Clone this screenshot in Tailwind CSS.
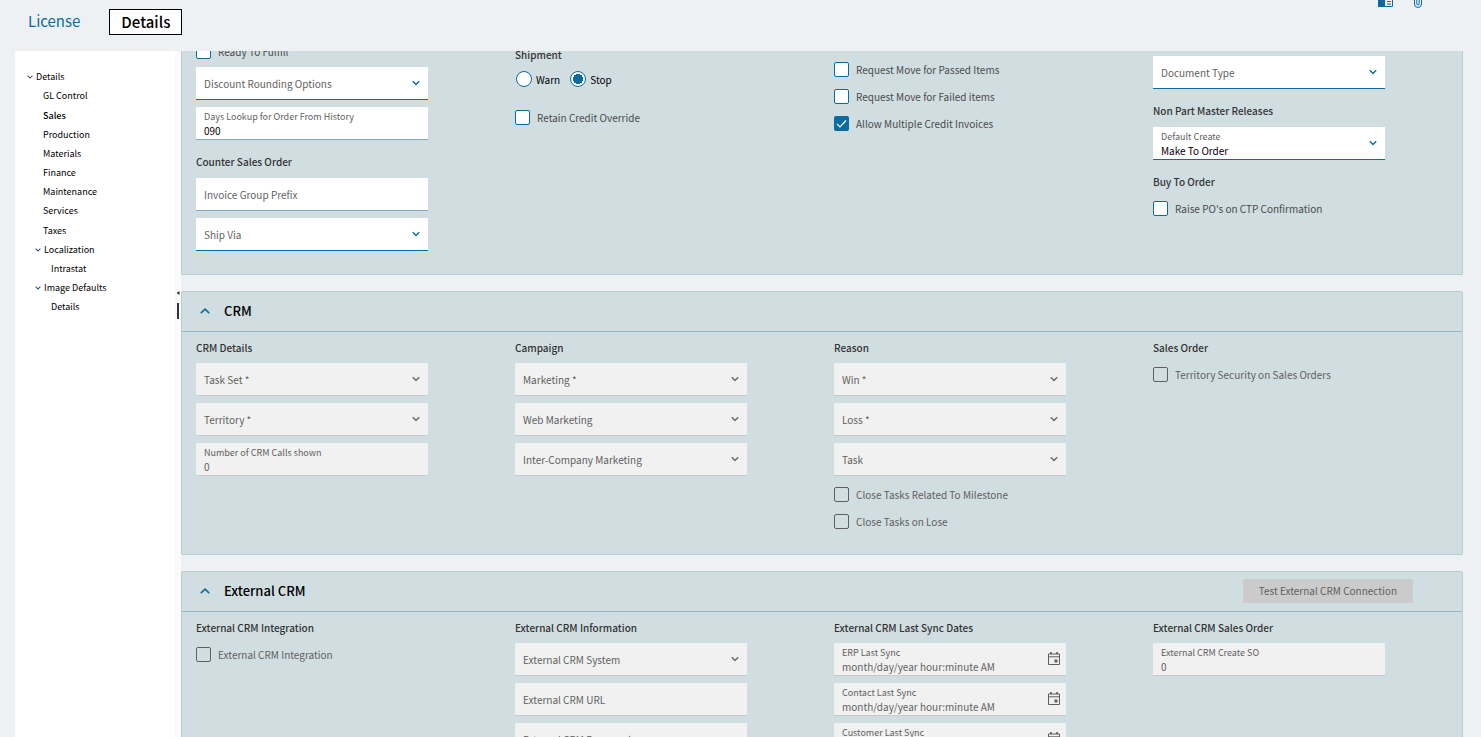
<!DOCTYPE html>
<html lang="en">
<head>
    <meta charset="UTF-8" />
    <meta name="viewport" content="width=device-width, initial-scale=1.0"/>
    <title>Company Configuration - Details</title>
    <script src="https://cdn.jsdelivr.net/npm/@tailwindcss/browser@4"></script>
</head>
<body class="h-screen overflow-hidden flex flex-col bg-[#edf1f4] font-['Source_Sans_Pro','Noto_Sans_CJK_SC',sans-serif] text-[10px] text-[#4a4a4a]">

    <!-- Shared icons -->
    <svg class="hidden">
        <symbol id="down" viewBox="0 0 8 6"><path d="M0.8 1.2 4 4.4 7.2 1.2" fill="none" stroke="currentColor" stroke-width="1.4"/></symbol>
        <symbol id="up" viewBox="0 0 10 6"><path d="M0.8 5.2 5 1.2 9.2 5.2" fill="none" stroke="currentColor" stroke-width="1.6"/></symbol>
        <symbol id="calendar" viewBox="0 0 12 13"><path d="M0.5 2h11v10.5h-11zM0.5 4.8h11M3 0v2M9 0v2" fill="none" stroke="currentColor"/><path d="M2 0.5h2v1.5H2zM8 0.5h2v1.5H8zM6.5 7.5h3v3h-3z" fill="currentColor"/></symbol>
    </svg>

    <header class="h-[51px] shrink-0 flex justify-between pr-[58px]">
        <nav class="flex items-start pt-[9px] pl-7 gap-[29px] text-[15px] leading-6">
            <a href="#license" class="text-[#0b6a9f]">License</a>
            <a href="#details" class="border border-black bg-white px-[11px] text-black font-medium">Details</a>
        </nav>
        <div class="flex items-start gap-[19px] text-[#0b6a9f]">
            <button type="button" aria-label="Panel">
                <svg class="w-4 h-2" viewBox="0 0 16 8"><path d="M0 0h7v7H0z" fill="currentColor"/><path d="M7 6.5h7.5V0M9 1.5h4M9 4h4" fill="none" stroke="currentColor"/></svg>
            </button>
            <button type="button" aria-label="Attachments">
                <svg class="w-2.5 h-2" viewBox="0 0 10 8"><path d="M1.5 0v4a3.4 3.4 0 0 0 7 0V0M3.8 0v3.8a1.2 1.2 0 0 0 2.4 0V0" fill="none" stroke="currentColor"/></svg>
            </button>
        </div>
    </header>

    <div class="flex-1 min-h-0 flex pl-[15px] pr-[18px]">
        <aside class="w-40 shrink-0 bg-white pt-4 text-[9px] text-black">
            <ul class="leading-[19px]">
                <li class="flex items-center pl-3 gap-[3px]"><svg class="w-1.5 h-1.5 text-[#555]"><use href="#down"/></svg><a href="#">Details</a></li>
                <li class="pl-7"><a href="#">GL Control</a></li>
                <li class="pl-7 pt-px font-medium"><a href="#">Sales</a></li>
                <li class="pl-7"><a href="#">Production</a></li>
                <li class="pl-7"><a href="#">Materials</a></li>
                <li class="pl-7"><a href="#">Finance</a></li>
                <li class="pl-7"><a href="#">Maintenance</a></li>
                <li class="pl-7"><a href="#">Services</a></li>
                <li class="pl-7 pt-px"><a href="#">Taxes</a></li>
                <li class="flex items-center pl-5 gap-[3px]"><svg class="w-1.5 h-1.5 text-[#2b4f8f]"><use href="#down"/></svg><a href="#">Localization</a></li>
                <li class="pl-9"><a href="#">Intrastat</a></li>
                <li class="flex items-center pl-5 gap-[3px]"><svg class="w-1.5 h-1.5 text-[#2b4f8f]"><use href="#down"/></svg><a href="#">Image Defaults</a></li>
                <li class="pl-9"><a href="#">Details</a></li>
            </ul>
        </aside>

        <!-- Splitter -->
        <div class="w-1.5 shrink-0 bg-[#fafafa] flex flex-col items-center pt-60 gap-2">
            <svg class="w-1 h-1" viewBox="0 0 4 4"><path d="M3.5 0v4L0.5 2z" fill="#333"/></svg>
            <div class="w-0.5 h-4 bg-[#333]"></div>
        </div>

        <main class="flex-1 min-w-0 overflow-hidden">
            <div class="-mt-[11px] flex flex-col gap-4">

                <section class="bg-[#d1dee1] border border-t-0 border-[#b9cccf] rounded-b-xs grid grid-cols-4 gap-x-[87px] pl-[14px] pr-[77px] pb-4">
                    <div>
                        <label class="flex items-center gap-[7px] h-[22px] mb-[5px]"><input type="checkbox" class="appearance-none size-[15px] rounded-xs border border-[#0b6a9f] bg-white"/>Ready To Fulfill</label>
                        <div class="relative mb-[7px]">
                            <select aria-label="Discount Rounding Options" class="appearance-none block w-full h-[33px] px-2 bg-white border-b border-[#0b6a9f] text-[#5f5f5f]"><option>Discount Rounding Options</option></select>
                            <svg class="absolute right-2 top-[13px] w-2 h-1.5 text-[#0b6a9f]"><use href="#down"/></svg>
                        </div>
                        <div class="h-[33px] mb-[7px] px-2 pt-[3px] bg-white border-b border-[#7fabc6]">
                            <label for="days" class="block text-[9px] leading-[14px] text-[#5f5f5f]">Days Lookup for Order From History</label>
                            <input id="days" value="090" class="block w-full leading-[14px] h-[14px] text-black"/>
                        </div>
                        <h3 class="mt-[14px] mb-2 leading-4 font-medium text-[#333]">Counter Sales Order</h3>
                        <input aria-label="Invoice Group Prefix" placeholder="Invoice Group Prefix" class="block w-full h-[33px] mb-[7px] px-2 bg-white border-b border-[#7fabc6] placeholder:text-[#5f5f5f]"/>
                        <div class="relative mb-[7px]">
                            <select aria-label="Ship Via" class="appearance-none block w-full h-[33px] px-2 bg-white border-b border-[#0b6a9f] text-[#5f5f5f]"><option>Ship Via</option></select>
                            <svg class="absolute right-2 top-[13px] w-2 h-1.5 text-[#0b6a9f]"><use href="#down"/></svg>
                        </div>
                    </div>

                    <div class="pt-[7px]">
                        <h3 class="mb-2 leading-4 font-medium text-[#333]">Shipment</h3>
                        <div class="flex items-center gap-2.5 h-4 mb-[19px] text-black">
                            <label class="flex items-center gap-1"><input type="radio" name="shipment" class="appearance-none size-4 rounded-full border border-[#0b6a9f] bg-white ml-px"/>Warn</label>
                            <label class="flex items-center gap-1"><input type="radio" name="shipment" checked class="appearance-none size-4 rounded-full border border-[#0b6a9f] bg-white checked:bg-[radial-gradient(circle,#0b6a9f_5px,#fff_5px)]"/>Stop</label>
                        </div>
                        <label class="flex items-center gap-[7px] h-[22px]"><input type="checkbox" class="appearance-none size-[15px] rounded-xs border border-[#0b6a9f] bg-white"/>Retain Credit Override</label>
                    </div>

                    <div class="pt-[18px]">
                        <label class="flex items-center gap-[7px] h-[22px] mb-[5px]"><input type="checkbox" class="appearance-none size-[15px] rounded-xs border border-[#0b6a9f] bg-white"/>Request Move for Passed Items</label>
                        <label class="flex items-center gap-[7px] h-[22px] mb-[5px]"><input type="checkbox" class="appearance-none size-[15px] rounded-xs border border-[#0b6a9f] bg-white"/>Request Move for Failed items</label>
                        <label class="flex items-center gap-[7px] h-[22px]">
                            <span class="relative flex">
                                <input type="checkbox" checked class="appearance-none size-[15px] rounded-xs bg-[#0b6a9f]"/>
                                <svg class="absolute inset-0 size-[15px] pointer-events-none" viewBox="0 0 15 15"><path d="M3 7.8 6 10.8 12 4.5" fill="none" stroke="#fff" stroke-width="1.2"/></svg>
                            </span>Allow Multiple Credit Invoices
                        </label>
                    </div>

                    <div class="pt-4">
                        <div class="relative mb-[7px]">
                            <select aria-label="Document Type" class="appearance-none block w-full h-[33px] px-2 bg-white border-b border-[#0b6a9f] text-[#5f5f5f]"><option>Document Type</option></select>
                            <svg class="absolute right-2 top-[13px] w-2 h-1.5 text-[#0b6a9f]"><use href="#down"/></svg>
                        </div>
                        <h3 class="mt-[14px] mb-2 leading-4 font-medium text-[#333]">Non Part Master Releases</h3>
                        <div class="relative h-[33px] mb-[7px] px-2 pt-[3px] bg-white border-b border-[#0b6a9f]">
                            <label for="create" class="block text-[9px] leading-[14px] text-[#5f5f5f]">Default Create</label>
                            <select id="create" class="appearance-none block w-full h-[14px] leading-[14px] text-black"><option>Make To Order</option></select>
                            <svg class="absolute right-2 top-[13px] w-2 h-1.5 text-[#0b6a9f]"><use href="#down"/></svg>
                        </div>
                        <h3 class="mt-[14px] mb-[7px] leading-4 font-medium text-[#333]">Buy To Order</h3>
                        <label class="flex items-center gap-[7px] h-[22px]"><input type="checkbox" class="appearance-none size-[15px] rounded-xs border border-[#0b6a9f] bg-white"/>Raise PO's on CTP Confirmation</label>
                    </div>
                </section>

                <section class="bg-[#d1dee1] border border-[#b9cccf] rounded-xs">
                    <div class="h-10 flex items-center gap-[14px] pl-[18px] pb-0.5 border-b border-[#95bac5]">
                        <button type="button" aria-label="Collapse CRM" class="text-[#0b6a9f]"><svg class="w-2.5 h-1.5"><use href="#up"/></svg></button>
                        <h2 class="text-[13px] text-black font-medium">CRM</h2>
                    </div>
                    <div class="grid grid-cols-4 gap-x-[87px] pl-[14px] pr-[77px] pt-2 pb-[17px]">
                        <div>
                            <h3 class="mb-[7px] leading-4 font-medium text-[#333]">CRM Details</h3>
                            <div class="relative mb-[7px]">
                                <select disabled aria-label="Task Set" class="appearance-none opacity-100 block w-full h-[33px] px-2 bg-[#f1f1f1] border-b border-[#c6c9c9] text-[#5f5f5f]"><option>Task Set *</option></select>
                                <svg class="absolute right-2 top-[13px] w-2 h-1.5 text-[#666]"><use href="#down"/></svg>
                            </div>
                            <div class="relative mb-[7px]">
                                <select disabled aria-label="Territory" class="appearance-none opacity-100 block w-full h-[33px] px-2 bg-[#f1f1f1] border-b border-[#c6c9c9] text-[#5f5f5f]"><option>Territory *</option></select>
                                <svg class="absolute right-2 top-[13px] w-2 h-1.5 text-[#666]"><use href="#down"/></svg>
                            </div>
                            <div class="h-[33px] mb-[7px] px-2 pt-[3px] bg-[#f1f1f1] border-b border-[#c6c9c9]">
                                <label for="calls" class="block text-[9px] leading-[14px] text-[#5f5f5f]">Number of CRM Calls shown</label>
                                <input id="calls" disabled value="0" class="block w-full leading-[14px] h-[14px] text-[#5f5f5f]"/>
                            </div>
                        </div>
                        <div>
                            <h3 class="mb-[7px] leading-4 font-medium text-[#333]">Campaign</h3>
                            <div class="relative mb-[7px]">
                                <select disabled aria-label="Marketing" class="appearance-none opacity-100 block w-full h-[33px] px-2 bg-[#f1f1f1] border-b border-[#c6c9c9] text-[#5f5f5f]"><option>Marketing *</option></select>
                                <svg class="absolute right-2 top-[13px] w-2 h-1.5 text-[#666]"><use href="#down"/></svg>
                            </div>
                            <div class="relative mb-[7px]">
                                <select disabled aria-label="Web Marketing" class="appearance-none opacity-100 block w-full h-[33px] px-2 bg-[#f1f1f1] border-b border-[#c6c9c9] text-[#5f5f5f]"><option>Web Marketing</option></select>
                                <svg class="absolute right-2 top-[13px] w-2 h-1.5 text-[#666]"><use href="#down"/></svg>
                            </div>
                            <div class="relative mb-[7px]">
                                <select disabled aria-label="Inter-Company Marketing" class="appearance-none opacity-100 block w-full h-[33px] px-2 bg-[#f1f1f1] border-b border-[#c6c9c9] text-[#5f5f5f]"><option>Inter-Company Marketing</option></select>
                                <svg class="absolute right-2 top-[13px] w-2 h-1.5 text-[#666]"><use href="#down"/></svg>
                            </div>
                        </div>
                        <div>
                            <h3 class="mb-[7px] leading-4 font-medium text-[#333]">Reason</h3>
                            <div class="relative mb-[7px]">
                                <select disabled aria-label="Win" class="appearance-none opacity-100 block w-full h-[33px] px-2 bg-[#f1f1f1] border-b border-[#c6c9c9] text-[#5f5f5f]"><option>Win *</option></select>
                                <svg class="absolute right-2 top-[13px] w-2 h-1.5 text-[#666]"><use href="#down"/></svg>
                            </div>
                            <div class="relative mb-[7px]">
                                <select disabled aria-label="Loss" class="appearance-none opacity-100 block w-full h-[33px] px-2 bg-[#f1f1f1] border-b border-[#c6c9c9] text-[#5f5f5f]"><option>Loss *</option></select>
                                <svg class="absolute right-2 top-[13px] w-2 h-1.5 text-[#666]"><use href="#down"/></svg>
                            </div>
                            <div class="relative mb-[7px]">
                                <select disabled aria-label="Task" class="appearance-none opacity-100 block w-full h-[33px] px-2 bg-[#f1f1f1] border-b border-[#c6c9c9] text-[#5f5f5f]"><option>Task</option></select>
                                <svg class="absolute right-2 top-[13px] w-2 h-1.5 text-[#666]"><use href="#down"/></svg>
                            </div>
                            <label class="flex items-center gap-[7px] h-[22px] mb-[5px] text-[#5f5f5f]"><input type="checkbox" disabled class="appearance-none size-[15px] rounded-xs border border-[#5f5f5f]"/>Close Tasks Related To Milestone</label>
                            <label class="flex items-center gap-[7px] h-[22px] mb-[5px] text-[#5f5f5f]"><input type="checkbox" disabled class="appearance-none size-[15px] rounded-xs border border-[#5f5f5f]"/>Close Tasks on Lose</label>
                        </div>
                        <div>
                            <h3 class="mb-[7px] leading-4 font-medium text-[#333]">Sales Order</h3>
                            <label class="flex items-center gap-[7px] h-[22px] text-[#5f5f5f]"><input type="checkbox" disabled class="appearance-none size-[15px] rounded-xs border border-[#5f5f5f]"/>Territory Security on Sales Orders</label>
                        </div>
                    </div>
                </section>

                <section class="bg-[#d1dee1] border border-[#b9cccf] rounded-xs">
                    <div class="h-10 flex items-center gap-[14px] pl-[18px] pr-[49px] pb-0.5 border-b border-[#95bac5]">
                        <button type="button" aria-label="Collapse External CRM" class="text-[#0b6a9f]"><svg class="w-2.5 h-1.5"><use href="#up"/></svg></button>
                        <h2 class="text-[13px] text-black font-medium">External CRM</h2>
                        <button type="button" disabled class="ml-auto h-6 px-4 rounded-xs bg-[#cbcbcb] text-[#5f5f5f]">Test External CRM Connection</button>
                    </div>
                    <div class="grid grid-cols-4 gap-x-[87px] pl-[14px] pr-[77px] pt-2 pb-[17px]">
                        <div>
                            <h3 class="mb-[7px] leading-4 font-medium text-[#333]">External CRM Integration</h3>
                            <label class="flex items-center gap-[7px] h-[22px] text-[#5f5f5f]"><input type="checkbox" disabled class="appearance-none size-[15px] rounded-xs border border-[#5f5f5f]"/>External CRM Integration</label>
                        </div>
                        <div>
                            <h3 class="mb-[7px] leading-4 font-medium text-[#333]">External CRM Information</h3>
                            <div class="relative mb-[7px]">
                                <select disabled aria-label="External CRM System" class="appearance-none opacity-100 block w-full h-[33px] px-2 bg-[#f1f1f1] border-b border-[#c6c9c9] text-[#5f5f5f]"><option>External CRM System</option></select>
                                <svg class="absolute right-2 top-[13px] w-2 h-1.5 text-[#666]"><use href="#down"/></svg>
                            </div>
                            <input disabled aria-label="External CRM URL" placeholder="External CRM URL" class="block w-full h-[33px] mb-[7px] px-2 bg-[#f1f1f1] border-b border-[#c6c9c9] placeholder:text-[#5f5f5f]"/>
                            <input disabled aria-label="External CRM Password" placeholder="External CRM Password" class="block w-full h-[33px] mb-[7px] px-2 bg-[#f1f1f1] border-b border-[#c6c9c9] placeholder:text-[#5f5f5f]"/>
                        </div>
                        <div>
                            <h3 class="mb-[7px] leading-4 font-medium text-[#333]">External CRM Last Sync Dates</h3>
                            <div class="relative h-[33px] mb-[7px] px-2 pt-[3px] bg-[#f1f1f1] border-b border-[#c6c9c9]">
                                <label for="erp" class="block text-[9px] leading-[14px] text-[#5f5f5f]">ERP Last Sync</label>
                                <input id="erp" disabled placeholder="month/day/year hour:minute AM" class="block w-full leading-[14px] h-[14px] placeholder:text-[#5f5f5f]"/>
                                <svg class="absolute right-1.5 top-[9px] w-3 h-[13px] text-[#5f5f5f]"><use href="#calendar"/></svg>
                            </div>
                            <div class="relative h-[33px] mb-[7px] px-2 pt-[3px] bg-[#f1f1f1] border-b border-[#c6c9c9]">
                                <label for="contact" class="block text-[9px] leading-[14px] text-[#5f5f5f]">Contact Last Sync</label>
                                <input id="contact" disabled placeholder="month/day/year hour:minute AM" class="block w-full leading-[14px] h-[14px] placeholder:text-[#5f5f5f]"/>
                                <svg class="absolute right-1.5 top-[9px] w-3 h-[13px] text-[#5f5f5f]"><use href="#calendar"/></svg>
                            </div>
                            <div class="relative h-[33px] mb-[7px] px-2 pt-[3px] bg-[#f1f1f1] border-b border-[#c6c9c9]">
                                <label for="customer" class="block text-[9px] leading-[14px] text-[#5f5f5f]">Customer Last Sync</label>
                                <input id="customer" disabled placeholder="month/day/year hour:minute AM" class="block w-full leading-[14px] h-[14px] placeholder:text-[#5f5f5f]"/>
                                <svg class="absolute right-1.5 top-[9px] w-3 h-[13px] text-[#5f5f5f]"><use href="#calendar"/></svg>
                            </div>
                        </div>
                        <div>
                            <h3 class="mb-[7px] leading-4 font-medium text-[#333]">External CRM Sales Order</h3>
                            <div class="h-[33px] mb-[7px] px-2 pt-[3px] bg-[#f1f1f1] border-b border-[#c6c9c9]">
                                <label for="so" class="block text-[9px] leading-[14px] text-[#5f5f5f]">External CRM Create SO</label>
                                <input id="so" disabled value="0" class="block w-full leading-[14px] h-[14px] text-[#5f5f5f]"/>
                            </div>
                        </div>
                    </div>
                </section>

            </div>
        </main>
    </div>
</body>
</html>
